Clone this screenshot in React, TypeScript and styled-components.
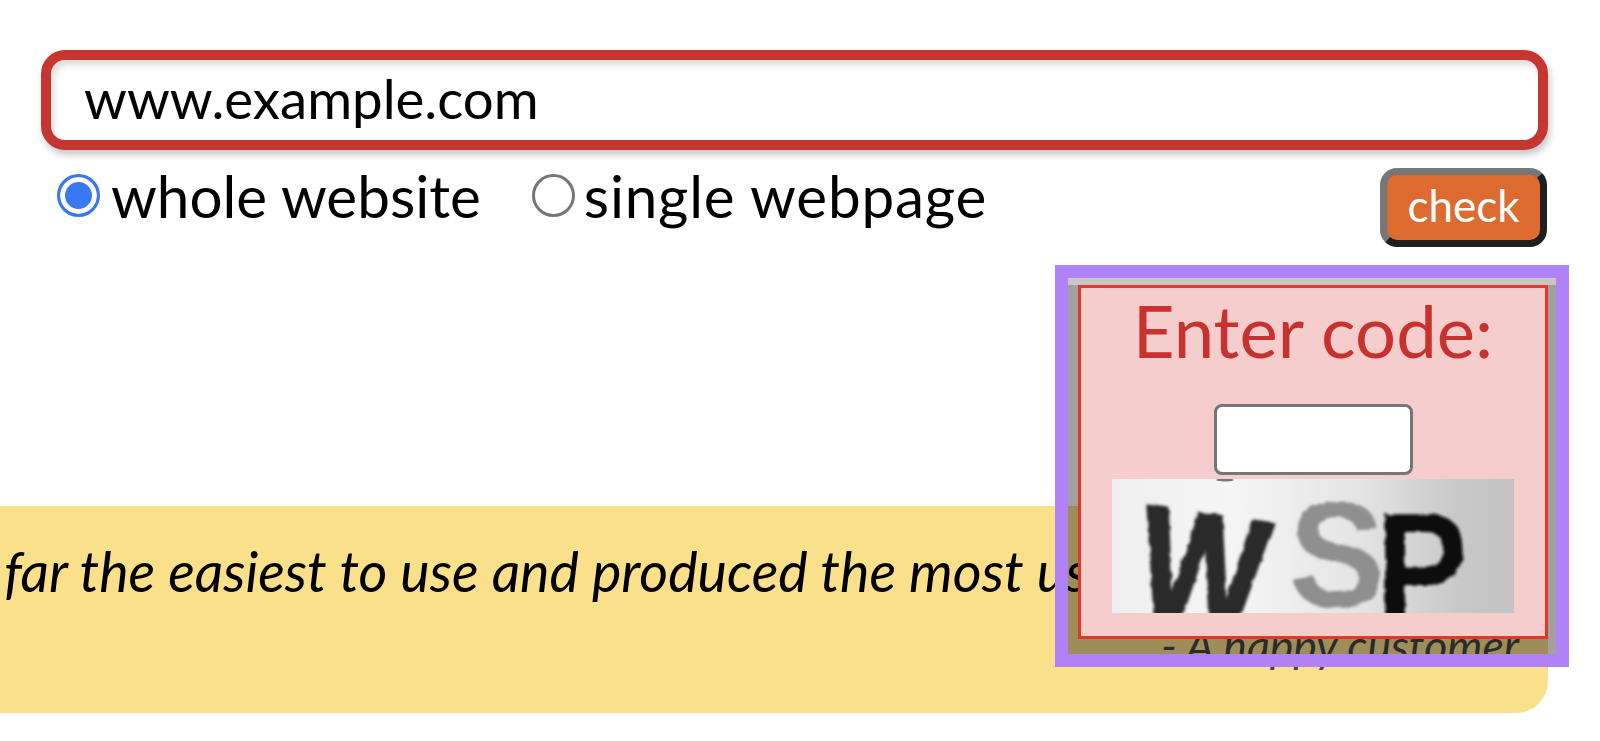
import React from 'react';
import styled, { createGlobalStyle } from 'styled-components';

const GlobalStyle = createGlobalStyle`
  html, body {
    margin: 0;
    padding: 0;
    background: #fff;
    overflow: hidden;
  }
`;

const FONT = `Lato, "Noto Sans", "Liberation Sans", sans-serif`;

const App = () => {
  return (
    <Page>
      <GlobalStyle />
      <UrlInput defaultValue="www.example.com" />
      <OptionsRow>
        <RadioGroup>
          <RadioLabel>
            <Radio type="radio" name="scope" defaultChecked />
            whole website
          </RadioLabel>
          <RadioLabel $tight>
            <Radio type="radio" name="scope" />
            single webpage
          </RadioLabel>
        </RadioGroup>
        <CheckButton>check</CheckButton>
      </OptionsRow>
      <Banner>
        <Quote>far the easiest to use and produced the most useful results</Quote>
        <Attribution>- A happy customer</Attribution>
      </Banner>
      <CaptchaFrame>
        <CaptchaBackdrop>
          <CaptchaBox>
            <CaptchaTitle>Enter code:</CaptchaTitle>
            <CodeInput />
            <CaptchaImage viewBox="0 0 402 134" role="img" aria-label="captcha">
              <defs>
                <linearGradient id="paper" x1="0" x2="1" y1="0" y2="0">
                  <stop offset="0" stopColor="#efefef" />
                  <stop offset="0.3" stopColor="#f5f5f5" />
                  <stop offset="0.62" stopColor="#e4e4e4" />
                  <stop offset="0.86" stopColor="#c8c8c8" />
                  <stop offset="1" stopColor="#c3c3c3" />
                </linearGradient>
                <filter id="rough" x="-10%" y="-10%" width="120%" height="120%">
                  <feTurbulence type="fractalNoise" baseFrequency="0.09" numOctaves="2" seed="4" result="noise" />
                  <feDisplacementMap in="SourceGraphic" in2="noise" scale="5" />
                  <feGaussianBlur stdDeviation="1.5" />
                </filter>
              </defs>
              <rect width="402" height="134" fill="url(#paper)" />
              <ellipse cx="113" cy="1" rx="9" ry="1.5" fill="#777" />
              <g filter="url(#rough)" fontFamily="'Liberation Sans', sans-serif" fontWeight="700">
                <text x="20" y="140" fontSize="165" fill="#2a2a2a" stroke="#2a2a2a" strokeWidth="4" textLength="126" lengthAdjust="spacingAndGlyphs" transform="rotate(8 20 140)">W</text>
                <text x="177" y="128" fontSize="150" fill="#8f8f8f" textLength="96" lengthAdjust="spacingAndGlyphs">S</text>
                <text x="264" y="144" fontSize="158" fill="#111" textLength="92" lengthAdjust="spacingAndGlyphs">P</text>
              </g>
            </CaptchaImage>
          </CaptchaBox>
        </CaptchaBackdrop>
      </CaptchaFrame>
    </Page>
  );
};

export default App;

const Page = styled.div`
  position: relative;
  width: 1600px;
  height: 741px;
  box-sizing: border-box;
  padding: 50px 52px 0 41px;
  overflow: hidden;
  font-family: ${FONT};
  color: #000;
`;

const UrlInput = styled.input`
  display: block;
  width: 100%;
  height: 100px;
  box-sizing: border-box;
  padding: 0 33px 4px;
  border: 10px solid #c63630;
  border-radius: 24px;
  outline: none;
  background: #fff;
  box-shadow: 2px 5px 7px rgba(0, 0, 0, 0.22), inset 3px 5px 6px rgba(0, 0, 0, 0.14);
  font-family: ${FONT};
  font-size: 54.6px;
  color: #000;
`;

const OptionsRow = styled.div`
  display: flex;
  justify-content: space-between;
  align-items: flex-start;
  margin-top: 18px;
`;

const RadioGroup = styled.div`
  display: flex;
  gap: 51px;
  padding: 5px 0 0 16px;
`;

const RadioLabel = styled.label<{ $tight?: boolean }>`
  display: flex;
  align-items: center;
  gap: ${({ $tight }) => ($tight ? '9px' : '11px')};
  height: 44px;
  font-size: 58.4px;
  line-height: 48px;
  letter-spacing: ${({ $tight }) => ($tight ? '0.8px' : '0')};
`;

const Radio = styled.input`
  appearance: none;
  flex: none;
  width: 43px;
  height: 43px;
  margin: 0;
  box-sizing: border-box;
  border: 3px solid #767676;
  border-radius: 50%;
  background: #fff;

  &:checked {
    border-color: #3a78f2;
    background: #3a78f2;
    box-shadow: inset 0 0 0 5px #fff;
  }
`;

const CheckButton = styled.button`
  width: 167px;
  height: 79px;
  box-sizing: border-box;
  margin-right: 1px;
  padding: 0 0 5px;
  border: 7px solid;
  border-color: #767676 #1f1f1f #1f1f1f #767676;
  border-radius: 17px;
  background: #dd6a2f;
  font-family: ${FONT};
  font-size: 44px;
  color: #fff;
`;

const Banner = styled.div`
  display: flex;
  flex-direction: column;
  height: 207px;
  margin: 259px 0 0 -41px;
  box-sizing: border-box;
  padding: 0 29px 0 4px;
  border-radius: 0 0 32px 0;
  background: #fae08b;
`;

const Quote = styled.div`
  margin-top: 30px;
  font-size: 55.6px;
  font-style: italic;
  line-height: 70px;
  white-space: nowrap;
`;

const Attribution = styled.div`
  margin-top: 12px;
  align-self: flex-end;
  font-size: 44.6px;
  font-style: italic;
  line-height: 54px;
  color: #444;
`;

const CaptchaFrame = styled.div`
  position: absolute;
  top: 265px;
  left: 1055px;
  width: 514px;
  height: 402px;
  box-sizing: border-box;
  border: 13px solid #b181f7;
`;

const CaptchaBackdrop = styled.div`
  width: 488px;
  height: 376px;
  box-sizing: border-box;
  padding: 7px 8px 15px 10px;
  background: linear-gradient(rgba(0, 0, 0, 0.22), rgba(0, 0, 0, 0.22) 7px, rgba(0, 0, 0, 0.37) 7px);
`;

const CaptchaBox = styled.div`
  display: flex;
  flex-direction: column;
  align-items: center;
  height: 100%;
  box-sizing: border-box;
  border: 3px solid #e2382a;
  background: #f6cdcd;
`;

const CaptchaTitle = styled.div`
  margin-top: -1px;
  font-size: 72.5px;
  line-height: 86px;
  color: #c8322e;
`;

const CodeInput = styled.input`
  width: 199px;
  height: 71px;
  box-sizing: border-box;
  margin: 31px 0 0 0;
  border: 3px solid #767676;
  border-radius: 8px;
  background: #fff;
  outline: none;
`;

const CaptchaImage = styled.svg`
  display: block;
  flex: none;
  width: 402px;
  height: 134px;
  margin-top: 4px;
`;
